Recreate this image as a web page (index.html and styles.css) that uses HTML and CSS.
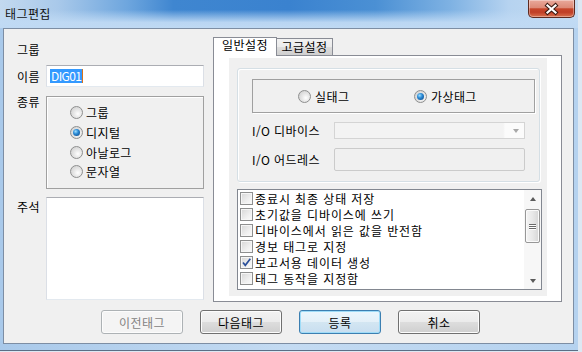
FILE: index.html
```html
<!DOCTYPE html>
<html lang="ko">
  <head>
    <meta charset="UTF-8" />
    <title>태그편집</title>
    <link rel="stylesheet" href="styles.css">
  </head>
  <body>
    <div class="window">
      <div class="titlebar">
        <span class="title">태그편집</span>
        <div class="close">
          <svg width="47" height="18" viewBox="0 0 47 18">
            <path d="M19.5 5.5 L27.5 12.5 M27.5 5.5 L19.5 12.5" stroke="#3a1a12" stroke-width="4.2" stroke-linecap="square" fill="none"/>
            <path d="M19.5 5.5 L27.5 12.5 M27.5 5.5 L19.5 12.5" stroke="#fff" stroke-width="2.2" stroke-linecap="square" fill="none"/>
          </svg>
        </div>
      </div>

      <div class="client">
        <div class="main">
          <div class="left">
            <div class="row row-group"><span class="label">그룹</span></div>
            <div class="row row-name">
              <span class="label">이름</span>
              <div class="textbox"><span class="sel">DIG01</span><span class="caret"></span></div>
            </div>
            <div class="row row-kind">
              <span class="label">종류</span>
              <div class="groupbox">
                <div class="opt-row"><span class="radio"></span>그룹</div>
                <div class="opt-row"><span class="radio on"></span>디지털</div>
                <div class="opt-row"><span class="radio"></span>아날로그</div>
                <div class="opt-row"><span class="radio"></span>문자열</div>
              </div>
            </div>
            <div class="row row-memo">
              <span class="label">주석</span>
              <div class="memo"></div>
            </div>
          </div>

          <div class="tabs">
            <div class="tab-strip">
              <div class="tab active">일반설정</div>
              <div class="tab">고급설정</div>
            </div>
            <div class="tab-panel">
              <div class="page">
                <div class="frame">
                  <div class="kind-box">
                    <div class="opt"><span class="radio"></span>실태그</div>
                    <div class="opt"><span class="radio on"></span>가상태그</div>
                  </div>
                  <div class="io-row">
                    <span class="io-label">I/O 디바이스</span>
                    <div class="combo"><span class="combo-arrow"></span></div>
                  </div>
                  <div class="io-row">
                    <span class="io-label">I/O 어드레스</span>
                    <div class="field"></div>
                  </div>
                </div>

                <div class="listbox">
                  <div class="items">
                    <div class="item"><span class="chk"></span>종료시 최종 상태 저장</div>
                    <div class="item"><span class="chk"></span>초기값을 디바이스에 쓰기</div>
                    <div class="item"><span class="chk"></span>디바이스에서 읽은 값을 반전함</div>
                    <div class="item"><span class="chk"></span>경보 태그로 지정</div>
                    <div class="item"><span class="chk"><svg width="11" height="11" viewBox="0 0 11 11"><path d="M2 5.5 L4.3 8.3 L9.3 1.8" stroke="#2a4f9a" stroke-width="1.7" fill="none"/></svg></span>보고서용 데이터 생성</div>
                    <div class="item"><span class="chk"></span>태그 동작을 지정함</div>
                  </div>
                  <div class="scrollbar">
                    <div class="sb-btn"><span class="arrow-up"></span></div>
                    <div class="thumb"><span></span><span></span><span></span></div>
                    <div class="sb-btn sb-down"><span class="arrow-down"></span></div>
                  </div>
                </div>
              </div>
            </div>
          </div>
        </div>

        <div class="buttons">
          <button class="btn disabled">이전태그</button>
          <button class="btn">다음태그</button>
          <button class="btn default">등록</button>
          <button class="btn">취소</button>
        </div>
      </div>
    </div>
  </body>
</html>
```

FILE: styles.css
```css
* {
    box-sizing: border-box;
}
body {
    margin: 0;
    background-color: #dde8f3;
    font-family: "Noto Sans CJK KR", "Noto Sans", sans-serif;
    font-size: 12px;
    letter-spacing: 0.4px;
    color: #000;
}
.window {
    width: 578px;
    height: 351px;
    padding: 0 4px 0 3px;
    background: linear-gradient(to right, #a9c9ea 0%, #c4dbf2 50%, #b5d2ef 100%);
    border-bottom: 1px solid #5b6f86;
}
.titlebar {
    height: 28px;
    margin: 0 -4px 0 -3px;
    display: flex;
    justify-content: space-between;
    align-items: flex-start;
    background:
        linear-gradient(to bottom, rgba(192, 218, 244, 0) 0%, rgba(192, 218, 244, 0) 35%, rgba(192, 218, 244, 0.95) 80%, #bfd9f3 100%),
        linear-gradient(to right, #c3d9ef 0%, #a9c9ea 10%, #6ea6de 22%, #3f86d0 30%, #3a82cf 50%, #4b90d4 65%, #7fb2e3 78%, #b6d3f0 88%, #c6dcf1 100%);
}
.title {
    margin: 7px 0 0 5px;
    line-height: 14px;
    color: #111;
}
.close {
    width: 47px;
    height: 18px;
    margin-right: 3px;
    border: 1px solid #5e2a20;
    border-top: none;
    border-radius: 0 0 5px 5px;
    background: linear-gradient(to bottom, #e9a99b 0%, #dd8a77 45%, #c6462b 52%, #c03f27 72%, #d9714e 100%);
    box-shadow: inset 0 0 0 1px rgba(255, 255, 255, 0.35);
}
.close svg {
    display: block;
    margin-left: -1px;
}
.client {
    height: 316px;
    border: 1px solid #7d8ea4;
    background-color: #f0f0f0;
}
.main {
    display: flex;
    align-items: flex-start;
    height: 273px;
    padding-left: 13px;
}
.left {
    width: 187px;
    margin-top: 13px;
}
.row {
    display: flex;
}
.label {
    width: 29px;
    flex-shrink: 0;
}
.row-group {
    height: 16px;
    line-height: 16px;
}
.row-name {
    margin-top: 7px;
    align-items: center;
}
.textbox {
    width: 158px;
    height: 22px;
    background-color: #fff;
    border: 1px solid #dbdfe6;
    border-top-color: #abadb3;
    border-bottom-color: #e3e9ef;
    display: flex;
    align-items: center;
    padding-left: 3px;
}
.sel {
    background-color: #3399ff;
    color: #fff;
    line-height: 14px;
    height: 14px;
    padding: 0 1px;
    letter-spacing: -0.6px;
}
.caret {
    width: 1px;
    height: 14px;
    background-color: #d8741c;
}
.row-kind {
    margin-top: 9px;
    align-items: flex-start;
}
.row-kind .label,
.row-memo .label {
    line-height: 12px;
}
.groupbox {
    width: 158px;
    height: 93px;
    border: 1px solid #a0a0a0;
    box-shadow: inset 1px 1px 0 #fff;
    padding: 6px 0 0 23px;
}
.opt-row {
    height: 19.7px;
    display: flex;
    align-items: center;
    gap: 3px;
}
.radio {
    width: 13px;
    height: 13px;
    flex-shrink: 0;
    border-radius: 50%;
    border: 1px solid #8e8f8f;
    background: radial-gradient(circle at 62% 62%, #ffffff 0%, #eaeaea 35%, #c9c9c9 100%);
    display: flex;
    align-items: center;
    justify-content: center;
}
.radio.on::after {
    content: "";
    width: 7px;
    height: 7px;
    border-radius: 50%;
    background: radial-gradient(circle at 38% 35%, #9fe0ff 0%, #2a8ad6 40%, #0c3f7a 100%);
}
.row-memo {
    margin-top: 8px;
    align-items: flex-start;
}
.row-memo .label {
    margin-top: 4px;
}
.memo {
    width: 158px;
    height: 103px;
    background-color: #fff;
    border: 1px solid #dbdfe6;
    border-top-color: #abadb3;
    border-bottom-color: #e3e9ef;
}
.tabs {
    width: 349px;
    margin: 8px 0 0 9px;
}
.tab-strip {
    display: flex;
    align-items: flex-end;
    height: 18px;
}
.tab {
    height: 17px;
    padding: 0 3px;
    margin-left: -1px;
    border: 1px solid #898c95;
    border-bottom: none;
    background: linear-gradient(to bottom, #f2f2f2 0%, #ebebeb 50%, #dddddd 51%, #cfcfcf 100%);
    line-height: 16px;
    text-align: center;
    width: 57px;
}
.tab.active {
    width: 64px;
    height: 19px;
    margin-left: 0;
    margin-bottom: -1px;
    background: #fff;
    position: relative;
    z-index: 1;
    line-height: 14px;
}
.tab-panel {
    height: 247px;
    border: 1px solid #898c95;
    background-color: #fff;
    padding: 2px 0 0 15px;
}
.page {
    width: 318px;
    height: 238px;
    background-color: #f0f0f0;
    padding: 10px 0 0 8px;
}
.frame {
    width: 303px;
    height: 114px;
    border: 1px solid #d5dfe5;
    border-radius: 3px;
    box-shadow: inset 1px 1px 0 #fff, 1px 1px 0 #fff;
    padding: 10px 0 0 14px;
}
.kind-box {
    width: 283px;
    height: 34px;
    border: 1px solid #a0a0a0;
    box-shadow: 1px 1px 0 #fff;
    display: flex;
    align-items: center;
    padding-left: 45px;
}
.opt {
    width: 116px;
    display: flex;
    align-items: center;
    gap: 4px;
}
.io-row {
    display: flex;
    align-items: center;
    margin-top: 9px;
}
.io-label {
    width: 82px;
}
.combo {
    width: 191px;
    height: 17px;
    border: 1px solid #d4d4d4;
    background: linear-gradient(to right, #f3f3f3 0%, #f3f3f3 89%, #fbfbfb 90%);
    display: flex;
    align-items: center;
    justify-content: flex-end;
    padding-right: 5px;
}
.combo-arrow {
    width: 0;
    height: 0;
    border-left: 3.5px solid transparent;
    border-right: 3.5px solid transparent;
    border-top: 4px solid #a8a8a8;
}
.field {
    width: 191px;
    height: 23px;
    border: 1px solid #cbcbcb;
    border-radius: 2px;
    background-color: #f0f0f0;
}
.listbox {
    width: 305px;
    height: 101px;
    margin-top: 7px;
    border: 1px solid #828790;
    background-color: #fff;
    display: flex;
}
.items {
    flex: 1;
}
.item {
    height: 16px;
    display: flex;
    align-items: center;
    gap: 2px;
    padding-left: 2px;
    white-space: nowrap;
    letter-spacing: 0.9px;
}
.chk {
    width: 13px;
    height: 13px;
    flex-shrink: 0;
    border: 1px solid #8e8f8f;
    background: linear-gradient(135deg, #d6d6d6 0%, #efefef 60%, #fcfcfc 100%);
    box-shadow: inset 0 0 0 1px #f6f6f6;
}
.chk svg {
    display: block;
}
.scrollbar {
    width: 17px;
    background-color: #f7f7f7;
    display: flex;
    flex-direction: column;
    align-items: center;
}
.sb-btn {
    width: 17px;
    height: 17px;
    display: flex;
    align-items: center;
    justify-content: center;
}
.sb-down {
    margin-top: auto;
}
.arrow-up {
    width: 0;
    height: 0;
    border-left: 3.5px solid transparent;
    border-right: 3.5px solid transparent;
    border-bottom: 4px solid #5a5a5a;
}
.arrow-down {
    width: 0;
    height: 0;
    border-left: 3.5px solid transparent;
    border-right: 3.5px solid transparent;
    border-top: 4px solid #5a5a5a;
}
.thumb {
    width: 15px;
    height: 34px;
    margin-top: 2px;
    border: 1px solid #979797;
    border-radius: 2px;
    background: linear-gradient(to right, #f4f4f4 0%, #e8e8e8 50%, #d6d6d6 100%);
    box-shadow: inset 0 0 0 1px #fafafa;
    display: flex;
    flex-direction: column;
    align-items: center;
    justify-content: center;
    gap: 1px;
}
.thumb span {
    width: 7px;
    height: 1px;
    background-color: #6b6b6b;
    box-shadow: 0 1px 0 #fff;
}
.buttons {
    display: flex;
    gap: 17px;
    padding-left: 97px;
    margin-top: 8px;
}
.btn {
    width: 82px;
    height: 24px;
    padding: 0;
    font: inherit;
    letter-spacing: inherit;
    color: #000;
    border: 1px solid #707070;
    border-radius: 3px;
    background: linear-gradient(to bottom, #f2f2f2 0%, #ebebeb 50%, #dddddd 51%, #cfcfcf 100%);
    box-shadow: inset 0 0 0 1px #fcfcfc;
}
.btn.disabled {
    border-color: #adb2b5;
    background: #f4f4f4;
    color: #838383;
}
.btn.default {
    border-color: #3c7fb1;
    box-shadow: inset 0 0 0 1px #9fdcf8;
    background: linear-gradient(to bottom, #eaf6fd 0%, #e4f0f8 50%, #d3e6f2 51%, #c8def0 100%);
}
```
